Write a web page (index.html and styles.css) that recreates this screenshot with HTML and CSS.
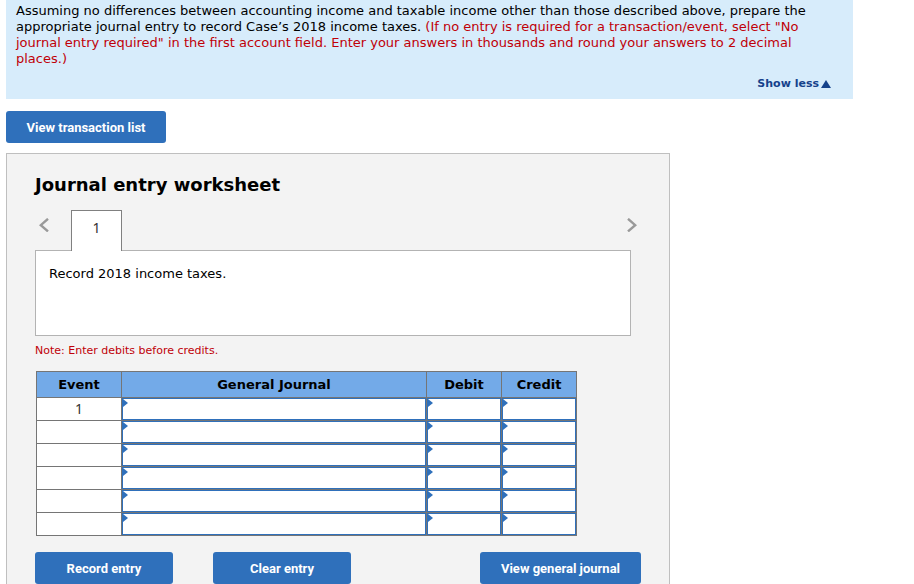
FILE: index.html
```html
<!DOCTYPE html>
<html lang="en">
<head>
<meta charset="utf-8">
<meta name="viewport" content="width=device-width, initial-scale=1">
<title>Journal entry worksheet</title>
<link rel="stylesheet" href="styles.css">
</head>
<body>
<main class="page">
  <section class="prompt">
    <p class="prompt-text">Assuming no differences between accounting income and taxable income other than those described above, prepare the appropriate journal entry to record Case’s 2018 income taxes. <span class="hint">(If no entry is required for a transaction/event, select "No journal entry required" in the first account field. Enter your answers in thousands and round your answers to 2 decimal places.)</span></p>
    <a class="toggle" href="#">Show less<svg class="toggle-icon" viewBox="0 0 10 8" aria-hidden="true"><path d="M5 0 10 8H0Z"/></svg></a>
  </section>

  <button class="btn btn-list" type="button">View transaction list</button>

  <section class="worksheet">
    <h1 class="title">Journal entry worksheet</h1>
    <div class="tabs">
      <button class="arrow" type="button" aria-label="Previous"><svg viewBox="0 0 10 14" aria-hidden="true"><path d="M9 .8 1.800 7.200l7.200 6.200"/></svg></button>
      <button class="tab" type="button">1</button>
      <button class="arrow arrow-next" type="button" aria-label="Next"><svg viewBox="0 0 10 14" aria-hidden="true"><path d="M1 .8 8.200 7.200l-7.200 6.200"/></svg></button>
    </div>
    <div class="description">Record 2018 income taxes.</div>
    <p class="note">Note: Enter debits before credits.</p>
    <table class="journal">
      <thead>
        <tr><th class="col-event">Event</th><th>General Journal</th><th class="col-amount">Debit</th><th class="col-amount">Credit</th></tr>
      </thead>
      <tbody>
        <tr><td>1</td><td class="entry"><input aria-label="Account 1"></td><td class="entry"><input aria-label="Debit 1"></td><td class="entry"><input aria-label="Credit 1"></td></tr>
        <tr><td></td><td class="entry"><input aria-label="Account 2"></td><td class="entry"><input aria-label="Debit 2"></td><td class="entry"><input aria-label="Credit 2"></td></tr>
        <tr><td></td><td class="entry"><input aria-label="Account 3"></td><td class="entry"><input aria-label="Debit 3"></td><td class="entry"><input aria-label="Credit 3"></td></tr>
        <tr><td></td><td class="entry"><input aria-label="Account 4"></td><td class="entry"><input aria-label="Debit 4"></td><td class="entry"><input aria-label="Credit 4"></td></tr>
        <tr><td></td><td class="entry"><input aria-label="Account 5"></td><td class="entry"><input aria-label="Debit 5"></td><td class="entry"><input aria-label="Credit 5"></td></tr>
        <tr><td></td><td class="entry"><input aria-label="Account 6"></td><td class="entry"><input aria-label="Debit 6"></td><td class="entry"><input aria-label="Credit 6"></td></tr>
      </tbody>
    </table>
    <div class="actions">
      <button class="btn btn-entry" type="button">Record entry</button>
      <button class="btn btn-entry" type="button">Clear entry</button>
      <button class="btn btn-view" type="button">View general journal</button>
    </div>
  </section>
</main>
</body>
</html>
```
FILE: styles.css
```css
* { box-sizing: border-box; }

body {
  margin: 0;
  background: #fff;
  color: #000;
  font: 13px/16px Verdana, "DejaVu Sans", sans-serif;
}

button, input { font: inherit; }

p, h1 { margin: 0; }

.page {
  display: flex;
  flex-direction: column;
  align-items: flex-start;
  padding: 0 6px;
}

.prompt {
  display: flex;
  flex-direction: column;
  width: 100%;
  max-width: 847px;
  padding: 3px 22px 7px 10px;
  background: #d7ecfb;
}

.hint, .note { color: #c00008; }

.toggle {
  display: flex;
  align-items: center;
  gap: 2px;
  align-self: flex-end;
  margin-top: 9px;
  color: #15428b;
  font-size: 11px;
  font-weight: bold;
  text-decoration: none;
}

.toggle-icon {
  width: 10px;
  height: 8px;
  fill: currentColor;
}

.btn {
  height: 32px;
  padding: 1px 0 0;
  border: 0;
  border-radius: 3px;
  background: #2f70bb;
  color: #fff;
  font: 700 13px/16px Roboto, sans-serif;
}

.btn-list {
  width: 160px;
  margin: 12px 0 10px;
}

.worksheet {
  width: 100%;
  max-width: 664px;
  padding: 19px 28px 24px;
  border: 1px solid #bfbfbf;
  background: #f3f3f3;
}

.title {
  font-size: 18px;
  line-height: 24px;
}

.tabs {
  display: flex;
  align-items: flex-start;
  margin-top: 13px;
}

.arrow {
  display: flex;
  width: 36px;
  padding: 8px 4px;
  border: 0;
  background: none;
}

.arrow svg {
  width: 10px;
  height: 14px;
  fill: none;
  stroke: #999;
  stroke-width: 2.4;
}

.arrow-next {
  justify-content: flex-end;
  margin-left: auto;
}

.tab {
  position: relative;
  width: 51px;
  height: 41px;
  margin-bottom: -1px;
  padding: 0 0 6px;
  border: 1px solid #808080;
  border-bottom: 0;
  background: #fff;
  color: #333;
  font-family: "Noto Sans", sans-serif;
  font-size: 14px;
}

.description {
  min-height: 86px;
  margin-right: 10px;
  padding: 15px 13px;
  border: 1px solid #b3b3b3;
  background: #fff;
}

.note {
  margin-top: 7px;
  font-size: 11px;
}

.journal {
  width: calc(100% - 65px);
  margin: 12px 0 0 1px;
  border-collapse: separate;
  border-spacing: 0;
  border: solid #757575;
  border-width: 1px 0 0 1px;
  table-layout: fixed;
}

.journal th, .journal td {
  padding: 0;
  border: solid #757575;
  border-width: 0 1px 1px 0;
  text-align: center;
}

.journal th {
  height: 26px;
  background: #73aae8;
}

.journal td {
  height: 23px;
  background: #fff;
  color: #333;
  font-family: "Noto Sans", sans-serif;
  font-size: 14px;
}

.col-event { width: 85px; }
.col-amount { width: 75px; }

.journal .entry { position: relative; }

.entry input {
  display: block;
  width: 100%;
  height: 22px;
  padding: 0 8px;
  border: 1px solid #2f70bb;
  border-radius: 0;
  background: #fff;
}

.entry::before {
  content: "";
  position: absolute;
  top: 1px;
  left: 1px;
  border: solid transparent;
  border-width: 4px 0 4px 5px;
  border-left-color: #2f70bb;
}

.actions {
  display: flex;
  gap: 40px;
  margin-top: 16px;
}

.btn-entry { width: 138px; }

.btn-view {
  width: 161px;
  margin-left: auto;
}
```
